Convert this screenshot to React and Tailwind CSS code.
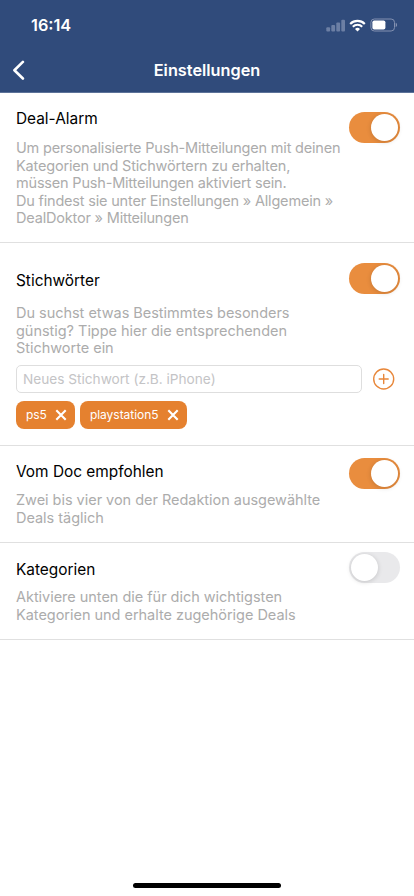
import React, { useState } from 'react';

function StatusIcons() {
  return (
    <div className="flex items-center">
      {/* Signal */}
      <svg width="20" height="13" viewBox="0 0 20 13" fill="#6c7fa4">
        <rect x="0.3" y="8.3" width="3.8" height="4.2" rx="1" />
        <rect x="5.3" y="6" width="3.8" height="6.5" rx="1" />
        <rect x="10.3" y="3.6" width="3.8" height="8.9" rx="1" />
        <rect x="15.3" y="0.8" width="3.7" height="11.7" rx="1" />
      </svg>
      {/* Wifi */}
      <svg className="ml-[3px]" width="17" height="13" viewBox="0 0 17 13" fill="none" stroke="#fff" strokeWidth="2.1">
        <path d="M1.2 4.9a10.4 10.4 0 0 1 14.6 0" />
        <path d="M3.8 7.7a6.7 6.7 0 0 1 9.4 0" />
        <path d="M8.5 12.4L6 9.9a3.6 3.6 0 0 1 5 0z" fill="#fff" stroke="none" />
      </svg>
      {/* Battery */}
      <svg className="ml-[4px]" width="28" height="14" viewBox="0 0 28 14" fill="none">
        <rect x="0.9" y="1" width="23.6" height="12" rx="3.4" stroke="#8391b1" />
        <rect x="2.4" y="2.5" width="13" height="9" rx="1.8" fill="#fff" />
        <path d="M25.7 4.8v4.4c.8-.3 1.4-1.2 1.4-2.2s-.6-1.9-1.4-2.2z" fill="#8391b1" />
      </svg>
    </div>
  );
}

function Toggle({ on, onClick }) {
  return (
    <button
      type="button"
      onClick={onClick}
      className={`w-[51px] h-[31px] shrink-0 rounded-full p-[2px] flex ${on ? 'bg-[#e98d3e] justify-end' : 'bg-[#e9e9eb] justify-start'}`}
    >
      <span className="w-[27px] h-[27px] rounded-full bg-white shadow-[0_1px_5px_rgba(0,0,0,0.16)]" />
    </button>
  );
}

function Lines({ lines, className = 'tracking-[-0.03px]' }) {
  return (
    <p className={`text-[14.5px] leading-[17.5px] text-[#acacac] whitespace-nowrap ${className}`}>
      {lines.map((line) => (
        <span key={line} className="block">{line}</span>
      ))}
    </p>
  );
}

function Chip({ label, onRemove }) {
  return (
    <span className="h-7 pl-[10px] pr-[8px] rounded-lg bg-[#e5812f] text-white text-[12px] tracking-[-0.03px] flex items-center">
      {label}
      <button type="button" onClick={onRemove} className="ml-[8px]">
        <svg width="12" height="12" viewBox="0 0 12 12" stroke="#fff" strokeWidth="2.1">
          <path d="M1.3 1.3l9.4 9.4M10.7 1.3l-9.4 9.4" />
        </svg>
      </button>
    </span>
  );
}

export default function App() {
  const [active, setActive] = useState({ alarm: true, keywords: true, doc: true, categories: false });
  const [keywords, setKeywords] = useState(['ps5', 'playstation5']);
  const [draft, setDraft] = useState('');

  const toggle = (key) => setActive({ ...active, [key]: !active[key] });

  const addKeyword = () => {
    const value = draft.trim();
    if (value && !keywords.includes(value)) setKeywords([...keywords, value]);
    setDraft('');
  };

  return (
    <div className="w-full h-[896px] bg-white flex flex-col overflow-hidden font-['Inter',sans-serif]">
      {/* Header */}
      <header className="h-[93px] shrink-0 bg-[#304b7b] border-b border-[#5c7299] text-white">
        <div className="h-12 pt-[2px] pl-[31px] pr-[16px] flex items-center justify-between">
          <span className="text-[16.3px] font-semibold">16:14</span>
          <StatusIcons />
        </div>
        <div className="h-[44px] px-[12px] grid grid-cols-[20px_1fr_20px] items-center">
          <button type="button">
            <svg width="13" height="20" viewBox="0 0 13 20" fill="none" stroke="#fff" strokeWidth="2.6" strokeLinecap="round" strokeLinejoin="round">
              <path d="M10.9 1.9L2.4 10.2l8.5 8.3" />
            </svg>
          </button>
          <h1 className="text-[16.3px] font-semibold text-center">Einstellungen</h1>
        </div>
      </header>

      {/* Deal-Alarm */}
      <section className="h-[150px] shrink-0 pl-4 pr-[14px] pt-[15px] flex justify-between border-b border-[#e0e0e0]">
        <div className="w-0 flex-1 pt-px">
          <h2 className="text-[15.4px] leading-5 text-black mb-[10px]">Deal-Alarm</h2>
          <Lines
            className="tracking-[-0.19px]"
            lines={[
              'Um personalisierte Push-Mitteilungen mit deinen',
              'Kategorien und Stichwörtern zu erhalten,',
              'müssen Push-Mitteilungen aktiviert sein.',
              'Du findest sie unter Einstellungen » Allgemein »',
              'DealDoktor » Mitteilungen',
            ]}
          />
        </div>
        <div className="pt-[4px]">
          <Toggle on={active.alarm} onClick={() => toggle('alarm')} />
        </div>
      </section>

      {/* Stichwörter */}
      <section className="h-[203px] shrink-0 pl-4 pr-[14px] pt-[20px] border-b border-[#e0e0e0]">
        <div className="h-[102px] flex justify-between">
          <div className="w-0 flex-1 pt-[8px]">
            <h2 className="text-[15.4px] leading-5 text-black mb-[13px]">Stichwörter</h2>
            <Lines
              lines={[
                'Du suchst etwas Bestimmtes besonders',
                'günstig? Tippe hier die entsprechenden',
                'Stichworte ein',
              ]}
            />
          </div>
          <Toggle on={active.keywords} onClick={() => toggle('keywords')} />
        </div>
        <div className="flex items-center">
          <input
            value={draft}
            onChange={(e) => setDraft(e.target.value)}
            placeholder="Neues Stichwort (z.B. iPhone)"
            className="w-[346px] h-7 px-[6px] rounded-[5px] border border-[#dedede] text-[13.65px] text-black placeholder:text-[#c4c4c6] focus:outline-none"
          />
          <button type="button" onClick={addKeyword} className="ml-[11px]">
            <svg width="22" height="22" viewBox="0 0 22 22" fill="none" stroke="#e8873a" strokeWidth="1.4" strokeLinecap="round">
              <circle cx="10.7" cy="11" r="10" />
              <path d="M10.7 6.5v9M6.2 11h9" />
            </svg>
          </button>
        </div>
        <div className="mt-2 flex gap-[5px]">
          {keywords.map((word) => (
            <Chip key={word} label={word} onRemove={() => setKeywords(keywords.filter((k) => k !== word))} />
          ))}
        </div>
      </section>

      {/* Vom Doc empfohlen */}
      <section className="h-[97px] shrink-0 pl-4 pr-[14px] pt-[12px] flex justify-between border-b border-[#e0e0e0]">
        <div className="w-0 flex-1 pt-[4px]">
          <h2 className="text-[15.4px] leading-5 text-black mb-[9px]">Vom Doc empfohlen</h2>
          <Lines lines={['Zwei bis vier von der Redaktion ausgewählte', 'Deals täglich']} />
        </div>
        <Toggle on={active.doc} onClick={() => toggle('doc')} />
      </section>

      {/* Kategorien */}
      <section className="h-[97px] shrink-0 pl-4 pr-[14px] pt-[9px] flex justify-between border-b border-[#e0e0e0]">
        <div className="w-0 flex-1 pt-[8px]">
          <h2 className="text-[15.4px] leading-5 text-black mb-[8px]">Kategorien</h2>
          <Lines lines={['Aktiviere unten die für dich wichtigsten', 'Kategorien und erhalte zugehörige Deals']} />
        </div>
        <Toggle on={active.categories} onClick={() => toggle('categories')} />
      </section>

      {/* Home indicator */}
      <div className="mt-auto mb-[8px] mx-auto w-[148px] h-[5px] rounded-full bg-black" />
    </div>
  );
}
